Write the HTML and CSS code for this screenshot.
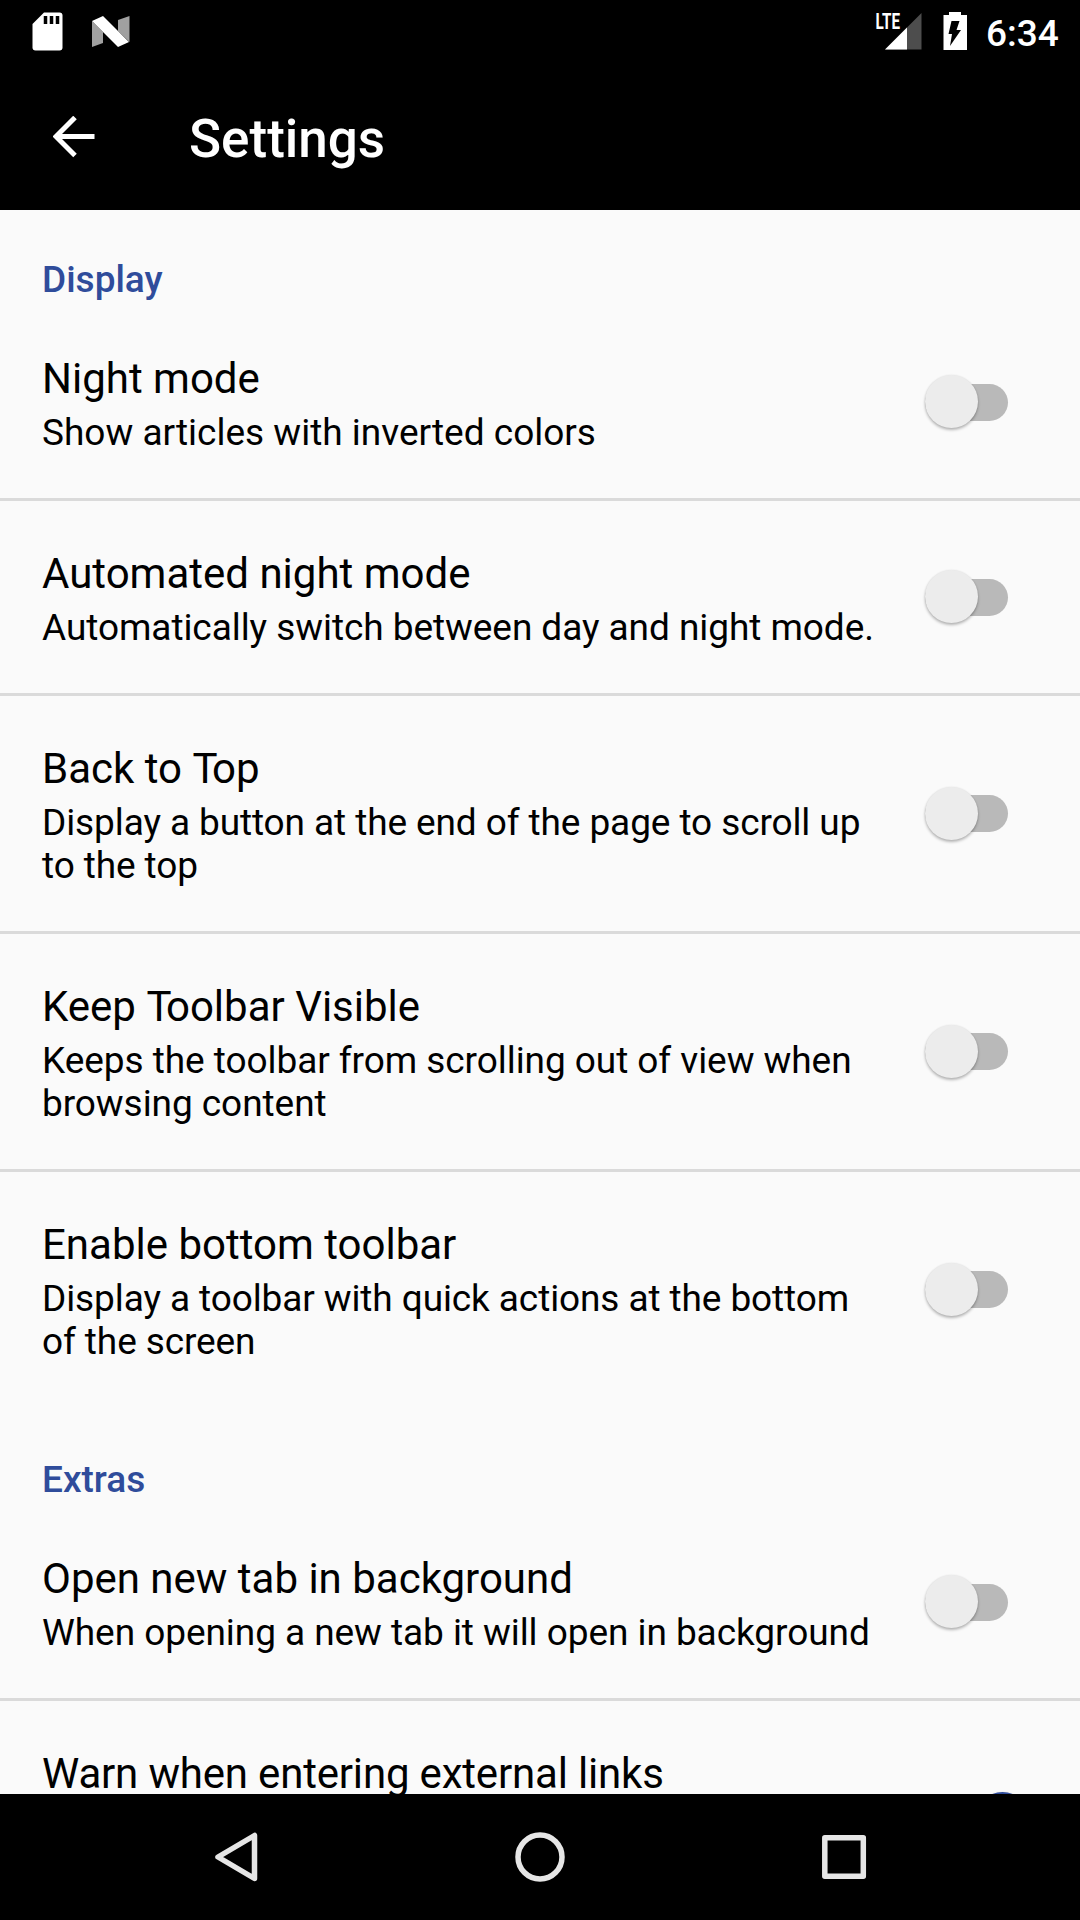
FILE: index.html
```html
<!DOCTYPE html>
<html lang="en">
<head>
<meta charset="utf-8">
<title>Settings</title>
<link rel="stylesheet" href="styles.css">
</head>
<body>
<header class="top">
  <div class="status">
    <svg width="140" height="63" viewBox="0 0 140 63"><path d="M44 12.5h15.500q3 0 3 3v32q0 3-3 3h-24q-3 0-3-3V24z" fill="#fff"/><path d="M45.500 16v8M51.500 16v8M57.500 16v8" stroke="#000" stroke-width="3.500"/><path d="M92 21l11 11v11l-11 4zM118 20l11.500-4v26L118 31z" fill="#a0a0a0"/><path d="M92 21l11-5 26 26-11 5z" fill="#fff"/></svg>
    <div class="status-right">
      <svg width="110" height="63" viewBox="870 0 110 63"><text class="lte" x="875.500" y="29" textLength="24.500" lengthAdjust="spacingAndGlyphs">LTE</text><path d="M921.500 13v36.500H885z" fill="#4d4d4d"/><path d="M907 27.500v22h-22z" fill="#fff"/><path d="M949 12h12v3h6v35h-23.500V15h5.500z" fill="#fff"/><path d="M951.500 21h8l-3 9h4.500l-11 16 2-12h-3.500z" fill="#000"/></svg>
      <span class="clock">6:34</span>
    </div>
  </div>
  <div class="appbar">
    <svg width="42" height="42" viewBox="0 0 42 42"><path d="M41.500 20.500H4M22 1.500L3 20.500l19 19" fill="none" stroke="#fff" stroke-width="5"/></svg>
    <h1>Settings</h1>
  </div>
</header>
<main>
  <section>
    <h2>Display</h2>
    <div class="row"><div class="text"><div class="title">Night mode</div><p>Show articles with inverted colors</p></div><i class="switch"></i></div>
    <div class="row"><div class="text"><div class="title">Automated night mode</div><p class="snug">Automatically switch between day and night mode.</p></div><i class="switch"></i></div>
    <div class="row"><div class="text"><div class="title">Back to <span class="kern">T</span>op</div><p class="snugger">Display a button at the end of the page to scroll up<br>to the top</p></div><i class="switch"></i></div>
    <div class="row"><div class="text"><div class="title">Keep <span class="kern">T</span>oolbar Visible</div><p class="snug">Keeps the toolbar from scrolling out of view when<br>browsing content</p></div><i class="switch"></i></div>
    <div class="row"><div class="text"><div class="title">Enable bottom toolbar</div><p class="snugger">Display a toolbar with quick actions at the bottom<br>of the screen</p></div><i class="switch"></i></div>
  </section>
  <section>
    <h2>Extras</h2>
    <div class="row"><div class="text"><div class="title">Open new tab in background</div><p class="snug">When opening a new tab it will open in background</p></div><i class="switch"></i></div>
    <div class="row"><div class="text"><div class="title tight">Warn when entering external links</div><p><br><br></p></div><i class="switch on"></i></div>
  </section>
</main>
<nav>
  <svg width="1080" height="126" viewBox="0 1794 1080 126" fill="none" stroke="#e6e6e6" stroke-width="5.500" stroke-linejoin="round"><path d="M254.500 1835.500v43l-36.500-21.500z"/><circle cx="540" cy="1857" r="22"/><rect x="824.800" y="1837.800" width="38.500" height="38.500"/></svg>
</nav>
</body>
</html>
```
FILE: styles.css
```css
* { box-sizing: border-box; margin: 0; }
body { width: 1080px; height: 1920px; display: flex; flex-direction: column; overflow: hidden; background: #fafafa; color: #000; font-family: Roboto, sans-serif; }
svg { display: block; flex: none; }
.top { height: 210px; flex: none; background: #000; color: #fff; }
.status { height: 63px; display: flex; justify-content: space-between; }
.status-right { display: flex; }
.lte { font-size: 22px; font-weight: 700; fill: #fff; }
.clock { font-size: 37px; font-weight: 500; line-height: 44px; padding-top: 12px; width: 94px; margin-left: 6px; }
.appbar { height: 147px; display: flex; align-items: center; padding: 0 53px; }
h1 { font-size: 53px; line-height: 60px; font-weight: 500; margin-left: 94px; padding-top: 4px; }
main { flex: 1; min-height: 0; overflow: hidden; }
section + section { padding-top: 3px; }
h2 { height: 122px; padding: 49px 42px 0; font-size: 37px; line-height: 42px; font-weight: 500; color: #2f4c9b; }
.row { display: flex; align-items: center; padding: 20px 71px 44px 42px; }
.row + .row { padding-top: 46px; border-top: 3px solid #dadada; }
.text { flex: 1; white-space: nowrap; }
.title { font-size: 42px; line-height: 53px; }
.kern { letter-spacing: -5.5px; }
.tight { letter-spacing: -0.18px; }
p { font-size: 37px; line-height: 43px; margin-top: 6px; }
.snug { letter-spacing: -0.06px; }
.snugger { letter-spacing: -0.1px; }
.switch { flex: none; display: flex; align-items: center; width: 84px; height: 54px; margin-bottom: 2px; position: relative; }
.switch::before { content: ""; width: 83px; height: 37px; border-radius: 19px; background: #b9b9b9; }
.switch::after { content: ""; position: absolute; left: 0; top: 0; width: 53px; height: 53px; border-radius: 50%; background: #ececec; box-shadow: 0 2px 3px rgba(0,0,0,.28), 0 0 2px rgba(0,0,0,.08); }
.on::before { background: #9dabd0; }
.on::after { left: 51px; background: #2f4c9b; }
nav { height: 126px; flex: none; background: #000; }
```
